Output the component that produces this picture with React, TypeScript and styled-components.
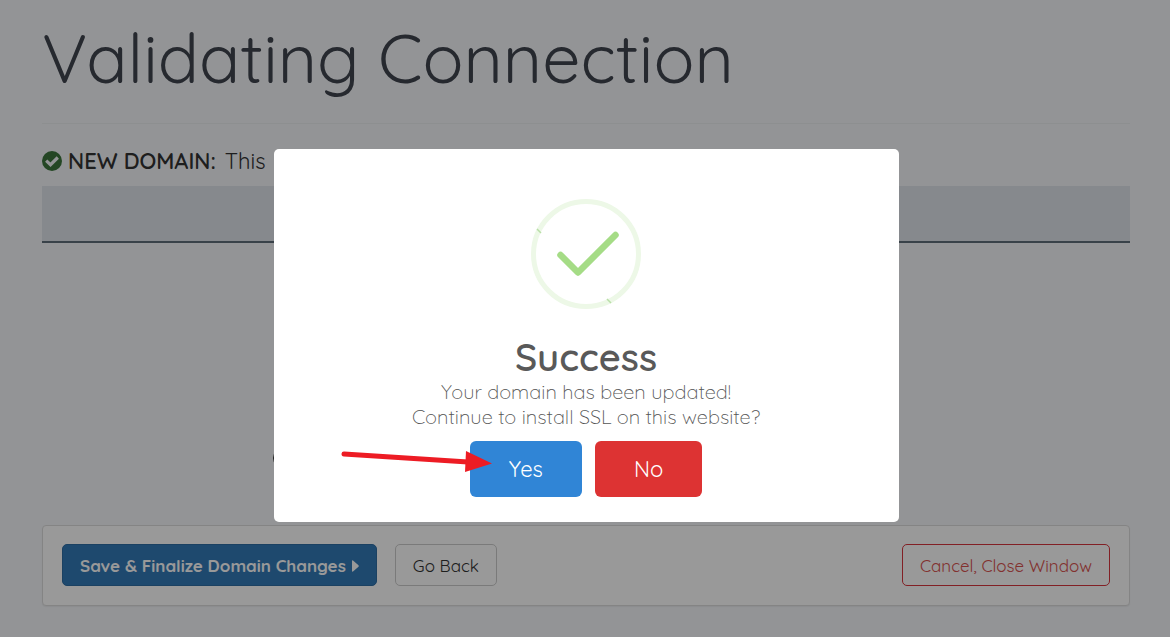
import React from "react";
import styled, { createGlobalStyle, css } from "styled-components";

const GlobalStyle = createGlobalStyle`
  *, *::before, *::after { box-sizing: border-box; }
  body {
    margin: 0;
    min-height: 100vh;
    background: #f5f7fa;
    color: #333333;
    font-family: Quicksand, Lato, "Open Sans", sans-serif;
    font-weight: 300;
    overflow: hidden;
  }
`;

const Page = styled.main`
  padding: 16px 40px 32px 42px;
`;

const Title = styled.h1`
  margin: 0;
  padding-bottom: 24px;
  border-bottom: 1px solid #eceef1;
  color: #40454f;
  font-size: 68px;
  font-weight: 400;
  line-height: 83px;
`;

const Status = styled.p`
  display: flex;
  align-items: center;
  gap: 6px;
  margin: 24px 0 12px;
  font-size: 22px;
  font-weight: 400;
  line-height: 26px;
`;

const StatusLabel = styled.strong`
  margin-right: 3px;
  font-weight: 600;
`;

const Band = styled.div`
  height: 57px;
  background: #dfe5ec;
  border-bottom: 2px solid #5f6f7a;
`;

const Workspace = styled.div`
  display: flex;
  align-items: flex-end;
  justify-content: center;
  height: 282px;
  padding-bottom: 57px;
`;

const Progress = styled.div`
  display: flex;
  width: 626px;
`;

const Spinner = styled.span`
  width: 20px;
  height: 20px;
  border: 2px solid #333333;
  border-radius: 50%;
`;

const ActionBar = styled.footer`
  display: flex;
  align-items: center;
  gap: 18px;
  padding: 18px 19px 19px;
  background: #ffffff;
  border: 1px solid #dddddd;
  border-radius: 4px;
  box-shadow: 0 1px 1px rgba(0, 0, 0, 0.05);
`;

type Tone = "primary" | "plain" | "danger";

const tones = {
  primary: css`
    background: #337ab7;
    border-color: #2e6da4;
    color: #ffffff;
    font-weight: 700;
  `,
  plain: css`
    background: #ffffff;
    border-color: #cccccc;
    color: #333333;
  `,
  danger: css`
    margin-left: auto;
    background: #ffffff;
    border-color: #d9363e;
    color: #d9534f;
  `,
};

const ActionButton = styled.button<{ $tone: Tone }>`
  display: inline-flex;
  align-items: center;
  gap: 6px;
  padding: 9px 17px 7px;
  border: 1px solid;
  border-radius: 5px;
  font-family: inherit;
  font-size: 17px;
  font-weight: 400;
  line-height: 24px;
  white-space: nowrap;
  ${({ $tone }) => tones[$tone]}
`;

const Backdrop = styled.div`
  position: fixed;
  inset: 0;
  display: flex;
  align-items: center;
  justify-content: center;
  padding: 34px 0 0 3px;
  background: rgba(0, 0, 0, 0.4);
`;

const Dialog = styled.section`
  position: relative;
  display: flex;
  flex-direction: column;
  align-items: center;
  width: 625px;
  max-width: 90%;
  padding: 50px 21px 25px 20px;
  background: #ffffff;
  border-radius: 5px;
  text-align: center;
`;

const DialogTitle = styled.h2`
  margin: 26px 0 0;
  color: #595959;
  font-size: 38px;
  font-weight: 600;
  line-height: 44px;
`;

const DialogText = styled.p`
  margin: 0;
  color: #545454;
  font-size: 20px;
  line-height: 25px;
`;

const DialogActions = styled.div`
  display: flex;
  gap: 13px;
  margin-top: 12px;
`;

const DialogButton = styled.button<{ $color: string }>`
  padding: 14px 39px;
  border: 0;
  border-radius: 6px;
  background: ${({ $color }) => $color};
  color: #ffffff;
  font-family: inherit;
  font-size: 22px;
  font-weight: 400;
  line-height: 28px;
`;

const Pointer = styled.svg`
  position: absolute;
  left: 66px;
  top: 298px;
  pointer-events: none;
`;

export default function App() {
  return (
    <>
      <GlobalStyle />
      <Page>
        <Title>Validating Connection</Title>
        <Status>
          <svg width="20" height="20" viewBox="0 0 20 20" aria-hidden="true">
            <circle cx="10" cy="10" r="10" fill="#3c763d" />
            <path d="M4.2 9.600 8.500 13.700 15.800 6.500" fill="none" stroke="#f5f7fa" strokeWidth="3.2" />
          </svg>
          <StatusLabel>NEW DOMAIN:</StatusLabel>
          <span>This</span>
        </Status>
        <Band />
        <Workspace>
          <Progress>
            <Spinner />
          </Progress>
        </Workspace>
        <ActionBar>
          <ActionButton type="button" $tone="primary">
            Save &amp; Finalize Domain Changes
            <svg width="7" height="12" viewBox="0 0 7 12" aria-hidden="true">
              <path d="M0 1Q0 0 1 .5L6.5 5.3Q7 6 6.5 6.7L1 11.5Q0 12 0 11Z" fill="currentColor" />
            </svg>
          </ActionButton>
          <ActionButton type="button" $tone="plain">Go Back</ActionButton>
          <ActionButton type="button" $tone="danger">Cancel, Close Window</ActionButton>
        </ActionBar>
      </Page>
      <Backdrop>
        <Dialog role="dialog" aria-modal="true" aria-labelledby="dialog-title">
          <svg width="110" height="110" viewBox="0 0 110 110" aria-hidden="true">
            <circle cx="55" cy="55" r="52.5" fill="none" stroke="#edf8e7" strokeWidth="5" />
            <path d="M6 30 10 34M76 100 80 104" stroke="#b9dfa8" strokeWidth="1.5" />
            <path d="M29.500 56 47 73.500 84.500 36" fill="none" stroke="#a5dc86" strokeWidth="6.5" strokeLinecap="round" strokeLinejoin="round" />
          </svg>
          <DialogTitle id="dialog-title">Success</DialogTitle>
          <DialogText>
            Your domain has been updated!
            <br />
            Continue to install SSL on this website?
          </DialogText>
          <DialogActions>
            <DialogButton type="button" $color="#3085d6">Yes</DialogButton>
            <DialogButton type="button" $color="#dd3333">No</DialogButton>
          </DialogActions>
          <Pointer width="154" height="28" viewBox="0 0 154 28" aria-hidden="true">
            <path d="M4 7 128 15" stroke="#ed1c24" strokeWidth="5" strokeLinecap="round" />
            <path d="M126 4 152 16.500 125 25Z" fill="#ed1c24" />
          </Pointer>
        </Dialog>
      </Backdrop>
    </>
  );
}
